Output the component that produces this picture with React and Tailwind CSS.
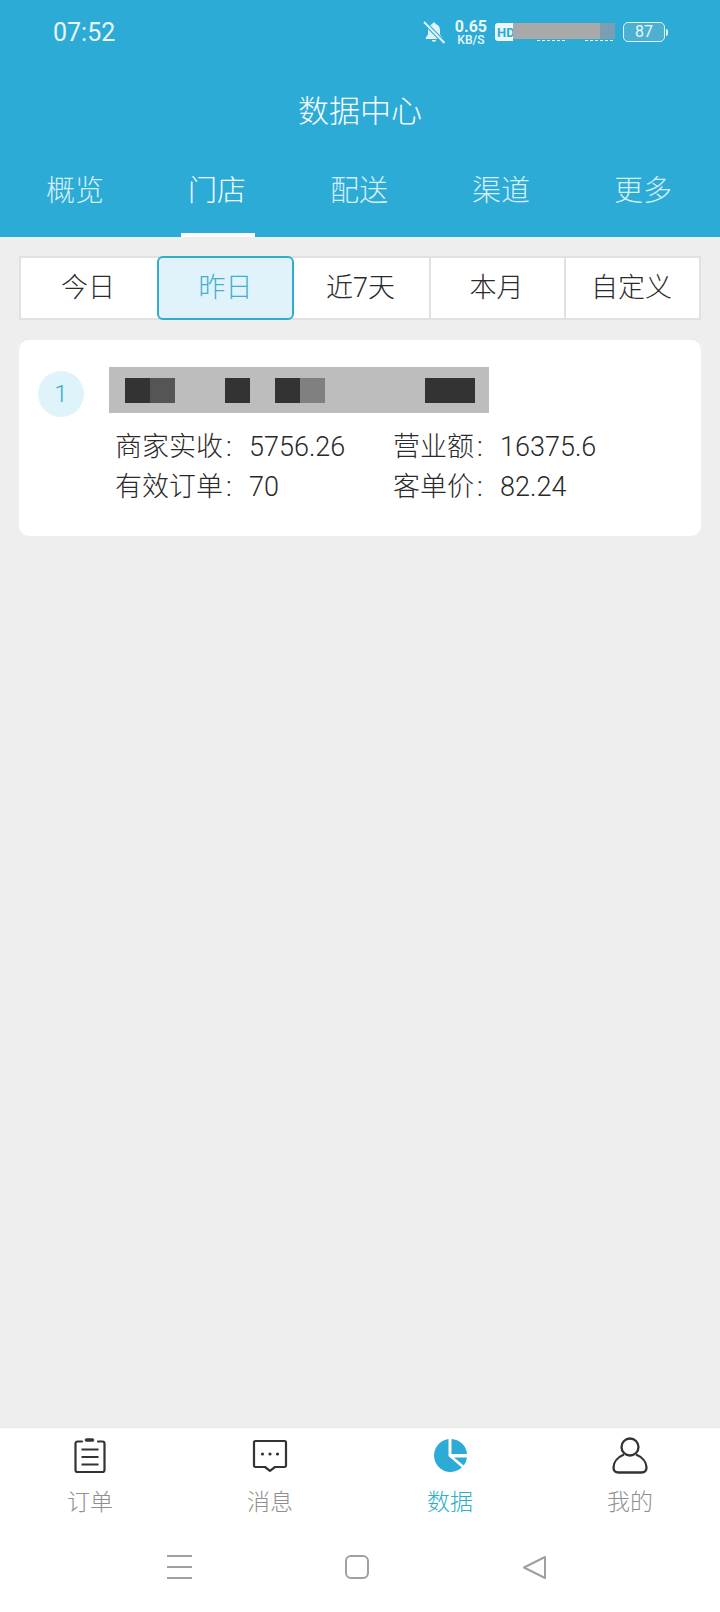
import React from "react";

const tabs = ["概览", "门店", "配送", "渠道", "更多"];
const ranges = ["今日", "昨日", "近7天", "本月", "自定义"];

const rangeWidths = {
  今日: "w-[136px]",
  近7天: "w-[135px]",
  本月: "w-[135px] border-l-2 border-[#e1e1e1]",
  自定义: "w-[135px] border-l-2 border-[#e1e1e1]",
};

const stats = [
  { label: "商家实收", value: "5756.26" },
  { label: "营业额", value: "16375.6" },
  { label: "有效订单", value: "70" },
  { label: "客单价", value: "82.24" },
];

function BellOff() {
  return (
    <svg width="24" height="24" viewBox="0 0 24 24" className="mr-[9px]">
      <path d="M12 2.5c-1 0-1.6.6-1.7 1.5C7.4 4.800 6 7.200 6 10v4.500L3.800 17.500V19h16.400v-1.500L18 14.500V10c0-2.800-1.400-5.200-4.300-6-.1-.9-.7-1.500-1.700-1.500zM9.800 20c.2 1 1.100 1.800 2.200 1.800s2-.8 2.200-1.800z" fill="#dff3fa" />
      <path d="M2.500 2.500 22 22.500" stroke="#2cabd6" strokeWidth="4" />
      <path d="M2 2 22.500 23" stroke="#dff3fa" strokeWidth="2" />
    </svg>
  );
}

function StatusBar() {
  return (
    <div className="flex h-[64px] items-center pl-[53px] pr-[52px] text-[#e9f7fb]">
      <span className="text-[25px] font-['Roboto',sans-serif] leading-none">07:52</span>
      <div className="ml-auto flex items-center">
        <BellOff />
        <div className="mr-[8px] flex flex-col items-center pt-[2px] font-['Roboto',sans-serif] font-bold leading-none">
          <span className="text-[16px] leading-[12px]">0.65</span>
          <span className="mt-[2px] text-[12px] font-medium leading-[10px]">KB/S</span>
        </div>
        <span className="flex h-[18px] w-[18px] items-center rounded-l-[3px] bg-[#e9f7fb] pl-[2px] font-['Roboto',sans-serif] text-[13px] font-bold leading-none text-[#2cabd6]">HD</span>
        <div className="flex w-[102px] flex-col">
          <div className="flex h-[16px]">
            <div className="w-[87px] bg-[#a9a9a9]" />
            <div className="w-[15px] bg-[#7b9fb2]" />
          </div>
          <div className="mt-px flex gap-[20px] pl-[24px]">
            <span className="w-[28px] border-t border-dashed border-[#e9f7fb]" />
            <span className="w-[28px] border-t border-dashed border-[#e9f7fb]" />
          </div>
        </div>
        <div className="ml-[8px] flex h-[20px] w-[42px] items-center justify-center rounded-[5px] border-[1.5px] border-[#dff3fa] bg-[#4cb0d0] font-['Roboto',sans-serif] text-[16px] leading-none">87</div>
        <div className="ml-[1px] h-[7px] w-[2px] rounded-r-sm bg-[#dff3fa]" />
      </div>
    </div>
  );
}

function OrderIcon() {
  return (
    <svg width="34" height="36" viewBox="0 0 34 36" fill="none" stroke="#333" strokeWidth="2.200">
      <path d="M9 3.500H4.500a2 2 0 0 0-2 2V32a2 2 0 0 0 2 2h25a2 2 0 0 0 2-2V5.500a2 2 0 0 0-2-2H25" strokeLinecap="round" />
      <rect x="12" y="0.500" width="9" height="3" rx="1.500" fill="#333" strokeWidth="0.500" />
      <path d="M8.500 11.500h17M8.500 19h17M8.500 26.500h17" />
    </svg>
  );
}

function MessageIcon() {
  return (
    <svg width="36" height="34" viewBox="0 0 36 34" fill="none">
      <path d="M3.500 2h29A1.500 1.500 0 0 1 34 3.500v23a1.500 1.500 0 0 1-1.500 1.500H23l-5 3.800-5-3.800H3.500A1.500 1.500 0 0 1 2 26.500v-23A1.500 1.500 0 0 1 3.500 2z" stroke="#333" strokeWidth="2.200" strokeLinejoin="round" />
      <circle cx="10.500" cy="15" r="1.600" fill="#333" />
      <circle cx="18" cy="15" r="1.600" fill="#333" />
      <circle cx="25.500" cy="15" r="1.600" fill="#333" />
    </svg>
  );
}

function PieIcon() {
  return (
    <svg width="35" height="35" viewBox="0 0 35 35" fill="#2cabd6">
      <path d="M15.500 1.100A16.500 16.500 0 1 0 28.800 29.500L15.500 18z" />
      <path d="M18.500 1A16.500 16.500 0 0 1 34 16H18.500z" />
      <path d="M21 19.500h13a16.500 16.500 0 0 1-3.200 8z" />
    </svg>
  );
}

function UserIcon() {
  return (
    <svg width="36" height="37" viewBox="0 0 36 37" fill="none" stroke="#333" strokeWidth="2.300">
      <circle cx="18" cy="10" r="8.500" />
      <path d="M12 17.500C6 20 1.500 25 1.500 30.500c0 3 2 5 5 5h23c3 0 5-2 5-5 0-5.500-4.500-10.500-10.500-13" />
    </svg>
  );
}

const navItems = [
  { label: "订单", icon: <OrderIcon />, active: false },
  { label: "消息", icon: <MessageIcon />, active: false },
  { label: "数据", icon: <PieIcon />, active: true },
  { label: "我的", icon: <UserIcon />, active: false },
];

export default function App() {
  return (
    <div className="flex h-[1612px] w-[720px] flex-col overflow-hidden bg-[#eeeeee] font-['Roboto','Noto_Sans_CJK_SC',sans-serif] text-[#2a2a2a]">
      <header className="h-[237px] bg-[#2cabd6] text-white">
        <StatusBar />
        <h1 className="mt-[28px] text-center text-[31px] font-light leading-[40px] text-[#f7fcfe]">数据中心</h1>
        <nav className="mt-[8px] flex px-[4px]">
          {tabs.map((t) => (
            <div key={t} className="flex h-[97px] w-[142px] flex-col items-center">
              <span className={t === "门店" ? "mt-[31px] text-[29px] font-light leading-[40px] text-[#f7fcfe]" : "mt-[31px] text-[29px] font-light leading-[40px] text-[#d5eff7]"}>{t}</span>
              {t === "门店" && <span className="mt-[22px] ml-[2px] h-[4px] w-[74px] bg-white" />}
            </div>
          ))}
        </nav>
      </header>

      <main className="flex-1 px-[19px] pt-[19px]">
        <div className="flex h-[64px] items-stretch border-2 border-[#e1e1e1] bg-white">
          {ranges.map((r) => (
            <div
              key={r}
              className={
                r === "昨日"
                  ? "-my-[2px] flex w-[137px] items-center justify-center rounded-[6px] border-2 border-[#2eaecb] bg-[#e0f3fb] text-[27px] font-light text-[#45aecb]"
                  : "flex items-center justify-center pr-[2px] text-[27px] font-light " + rangeWidths[r]
              }
            >
              {r}
            </div>
          ))}
        </div>

        <section className="mt-[20px] flex h-[196px] rounded-[10px] bg-white pl-[19px] pt-[27px]">
          <div className="mt-[4px] flex h-[46px] w-[46px] items-center justify-center rounded-full bg-[#dff3fb] text-[24px] font-light text-[#2eaecb]">1</div>
          <div className="ml-[25px]">
            <div className="flex h-[46px] w-[380px] items-center bg-[#bdbdbd] pl-[16px]">
              <span className="h-[25px] w-[25px] bg-[#333333]" />
              <span className="h-[25px] w-[25px] bg-[#555555]" />
              <span className="ml-[50px] h-[25px] w-[25px] bg-[#333333]" />
              <span className="ml-[25px] h-[25px] w-[25px] bg-[#333333]" />
              <span className="h-[25px] w-[25px] bg-[#808080]" />
              <span className="ml-[100px] h-[25px] w-[50px] bg-[#333333]" />
            </div>
            <div className="mt-[14px] grid grid-cols-[278px_1fr] pl-[6px] text-[27px] font-light leading-[40px]">
              {stats.map((s) => (
                <div key={s.label} className="flex">
                  <span>{s.label}</span>
                  <span className="w-[26px] pl-[3px]">:</span>
                  <span>{s.value}</span>
                </div>
              ))}
            </div>
          </div>
        </section>
      </main>

      <footer className="h-[185px] border-t border-[#e8e8e8] bg-white">
        <div className="flex h-[105px]">
          {navItems.map((n) => (
            <div key={n.label} className="flex w-[180px] flex-col items-center pt-[9px]">
              <div className="flex h-[37px] items-center">{n.icon}</div>
              <span className={n.active ? "mt-[13px] text-[23px] font-light leading-[32px] text-[#2eaecb]" : "mt-[13px] text-[23px] font-light leading-[32px] text-[#8f8f8f]"}>{n.label}</span>
            </div>
          ))}
        </div>
        <div className="flex items-center pl-[167px] pt-[21px]">
          <svg width="25" height="26" viewBox="0 0 25 26" stroke="#a0a0a0" strokeWidth="2">
            <path d="M0 2h25M0 13h25M0 24h25" />
          </svg>
          <svg width="24" height="24" viewBox="0 0 24 24" fill="none" stroke="#a0a0a0" strokeWidth="2" className="ml-[153px]">
            <rect x="1" y="1" width="22" height="22" rx="5" />
          </svg>
          <svg width="25" height="25" viewBox="0 0 25 25" fill="none" stroke="#a0a0a0" strokeWidth="2" strokeLinejoin="round" className="ml-[153px]">
            <path d="M23 2 2 12.500 23 23z" />
          </svg>
        </div>
      </footer>
    </div>
  );
}
